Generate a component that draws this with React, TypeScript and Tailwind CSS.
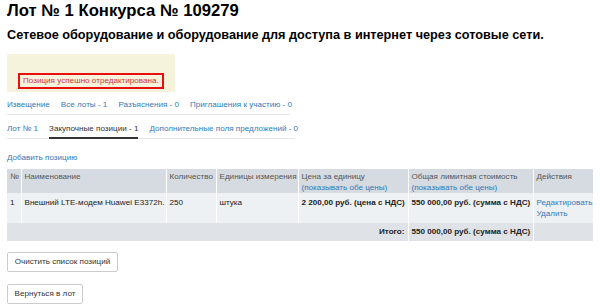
import React from "react";

const font = { fontFamily: '"Liberation Sans", Arial, sans-serif' };

function NavLink({ children, active }: { children: React.ReactNode; active?: boolean }) {
  return (
    <span
      className={
        active
          ? "whitespace-nowrap text-[#333] border-b-2 border-[#333] pb-[3px] -mb-px"
          : "whitespace-nowrap text-[#337ab7] pb-[4px]"
      }
    >
      {children}
    </span>
  );
}

export default function App() {
  return (
    <div className="w-[600px] h-[307px] bg-white text-[#333] px-[7px] overflow-hidden" style={font}>
      <h1 className="pt-[1px] text-[16.7px] leading-[20px] font-bold text-black whitespace-nowrap">Лот № 1 Конкурса № 109279</h1>
      <h2 className="mt-[6px] text-[12.7px] leading-[16px] font-bold text-black whitespace-nowrap">
        Сетевое оборудование и оборудование для доступа в интернет через сотовые сети.
      </h2>

      {/* Alert */}
      <div className="mt-[11px] w-[168px] h-[38px] bg-[#f5f3dc] rounded-[2px] pl-[11px] pt-[12px]">
        <div className="inline-block whitespace-nowrap border-2 border-[#e8100f] px-[3px] h-[16px] text-[8.1px] leading-[12px] text-[#d8323a]">
          Позиция успешно отредактирована.
        </div>
      </div>

      {/* Tabs */}
      <div className="mt-[7px] w-[283px] flex gap-[11px] text-[8.1px] leading-[11px] border-b border-[#e5e5e5]">
        <NavLink>Извещение</NavLink>
        <NavLink>Все лоты - 1</NavLink>
        <NavLink>Разъяснения - 0</NavLink>
        <NavLink>Приглашения к участию - 0</NavLink>
      </div>
      <div className="mt-[8px] w-[288px] flex gap-[11px] text-[8.1px] leading-[11px] border-b border-[#e5e5e5]">
        <NavLink>Лот № 1</NavLink>
        <NavLink active>Закупочные позиции - 1</NavLink>
        <NavLink>Дополнительные поля предложений - 0</NavLink>
      </div>

      <div className="mt-[13px] text-[8.1px] leading-[11px] text-[#337ab7]">Добавить позицию</div>

      {/* Table */}
      <table className="mt-[6px] w-[586px] table-fixed border-collapse text-[8.1px] leading-[10.5px]">
        <colgroup>
          <col className="w-[14px]" />
          <col className="w-[145px]" />
          <col className="w-[50px]" />
          <col className="w-[82px]" />
          <col className="w-[110px]" />
          <col className="w-[125px]" />
          <col className="w-[60px]" />
        </colgroup>
        <thead>
          <tr className="bg-[#d6dbe1] text-[#555] align-top h-[24px]">
            <th className="font-normal text-left px-[3px] pt-[3px] border-r border-white">№</th>
            <th className="font-normal text-left px-[3px] pt-[3px] border-r border-white">Наименование</th>
            <th className="font-normal text-left px-[3px] pt-[3px] border-r border-white">Количество</th>
            <th className="font-normal text-left px-[3px] pt-[3px] border-r border-white whitespace-nowrap">Единицы измерения</th>
            <th className="font-normal text-left px-[3px] pt-[3px] border-r border-white whitespace-nowrap">
              Цена за единицу
              <br />
              <span className="text-[#337ab7]">(показывать обе цены)</span>
            </th>
            <th className="font-normal text-left px-[3px] pt-[3px] border-r border-white whitespace-nowrap">
              Общая лимитная стоимость
              <br />
              <span className="text-[#337ab7]">(показывать обе цены)</span>
            </th>
            <th className="font-normal text-left px-[3px] pt-[3px]">Действия</th>
          </tr>
        </thead>
        <tbody>
          <tr className="bg-[#eef1f4] align-top h-[30px] text-[#222]">
            <td className="px-[3px] pt-[5px] border-r border-white">1</td>
            <td className="px-[3px] pt-[5px] border-r border-white whitespace-nowrap">Внешний LTE-модем Huawei E3372h.</td>
            <td className="px-[3px] pt-[5px] border-r border-white">250</td>
            <td className="px-[3px] pt-[5px] border-r border-white">штука</td>
            <td className="px-[3px] pt-[5px] border-r border-white font-bold whitespace-nowrap">2 200,00 руб. (цена с НДС)</td>
            <td className="px-[3px] pt-[5px] border-r border-white font-bold whitespace-nowrap">550 000,00 руб. (сумма с НДС)</td>
            <td className="px-[3px] pt-[5px] text-[#337ab7] whitespace-nowrap">
              Редактировать
              <br />
              Удалить
            </td>
          </tr>
          <tr className="bg-[#dfe3e8] h-[18px] text-[#222]">
            <td colSpan={5} className="px-[3px] text-right font-bold border-r border-white">Итого:</td>
            <td className="px-[3px] font-bold border-r border-white whitespace-nowrap">550 000,00 руб. (сумма с НДС)</td>
            <td></td>
          </tr>
        </tbody>
      </table>

      {/* Buttons */}
      <div className="mt-[11px] flex flex-col items-start gap-[12px]">
        <button className="h-[20px] w-[111px] border border-[#ccc] rounded-[2px] bg-white text-[8.1px] text-[#333] whitespace-nowrap">
          Очистить список позиций
        </button>
        <button className="h-[20px] w-[76px] border border-[#ccc] rounded-[2px] bg-white text-[8.1px] text-[#333] whitespace-nowrap">
          Вернуться в лот
        </button>
      </div>
    </div>
  );
}
